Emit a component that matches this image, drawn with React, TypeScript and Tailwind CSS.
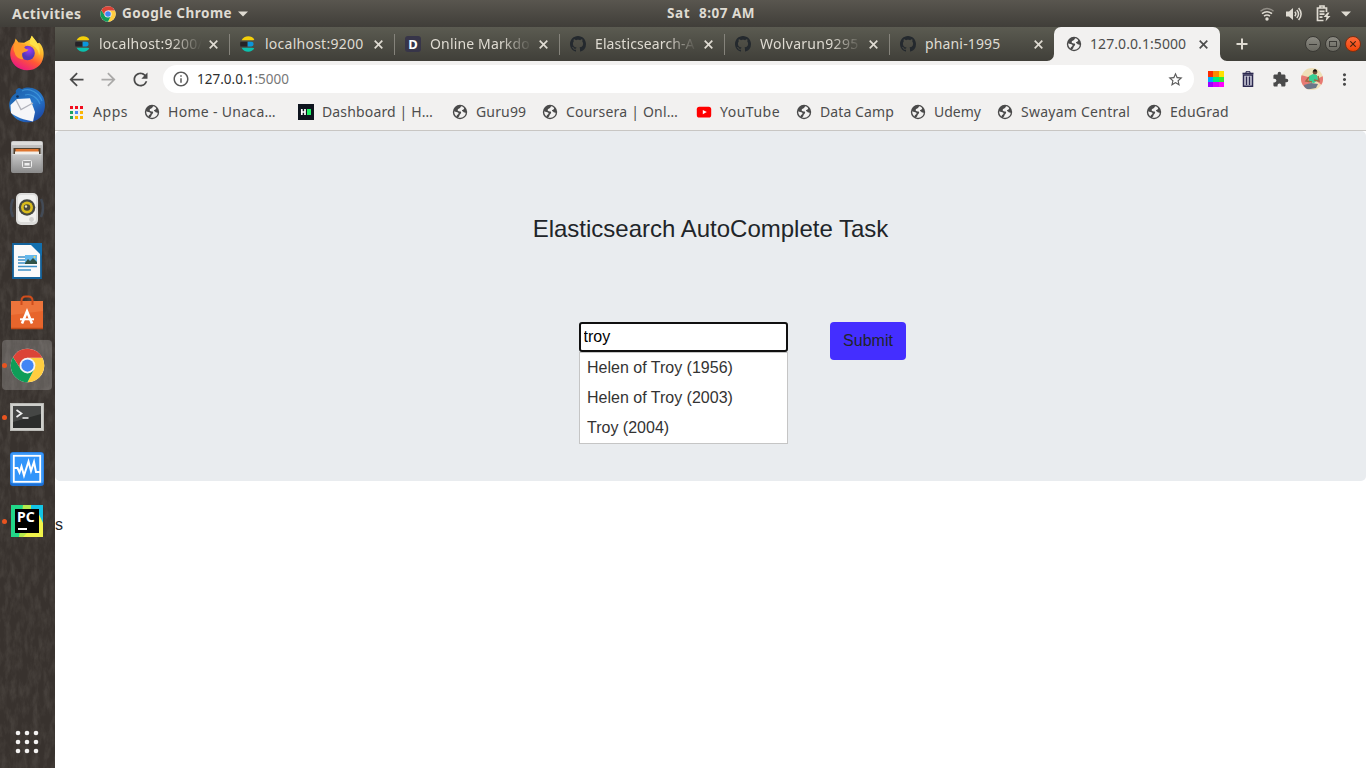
import type { ReactNode } from "react";
import {
  MdArrowBack,
  MdArrowForward,
  MdRefresh,
  MdInfoOutline,
  MdStarBorder,
  MdExtension,
  MdMoreVert,
} from "react-icons/md";

function ChromeLogo({ size }: { size: number }) {
  return (
    <svg width={size} height={size} viewBox="0 0 48 48">
      <circle cx="24" cy="24" r="23" fill="#fff" />
      <path d="M24 13.5 H44.5 A23 23 0 0 1 24 47 L33.1 29.2 Z" fill="#ffcd40" />
      <path d="M14.9 29.2 L4.1 12.5 A23 23 0 0 0 24 47 L33.1 29.2 Z" fill="#0f9d58" />
      <path d="M4.1 12.5 A23 23 0 0 1 44.5 13.5 H24 L14.9 29.2 Z" fill="#db4437" />
      <circle cx="24" cy="24" r="10.8" fill="#f4f4f4" />
      <circle cx="24" cy="24" r="8.4" fill="#4285f4" />
    </svg>
  );
}

function Elastic() {
  return (
    <svg width="16" height="16" viewBox="0 0 16 16">
      <path d="M1.6 4.3C2.9 1.6 5.3.2 8.3.2c2.6 0 4.7 1.2 6 3.2-.5.6-1.2.9-2.2.9z" fill="#f4cf0a" />
      <path d="M.4 5.7h7.2v4.7H.4C0 8.9 0 7.2.4 5.7z" fill="#252328" />
      <path d="M7.6 5.7h3.7a2.35 2.35 0 0 1 0 4.7H7.6z" fill="#0b96dc" />
      <path d="M1.6 11.7h10.5c1 0 1.7.3 2.2.9-1.3 2-3.4 3.2-6 3.2-3 0-5.4-1.4-6.7-4.1z" fill="#0bc0ad" />
    </svg>
  );
}

function GithubMark() {
  return (
    <svg width="16" height="16" viewBox="0 0 16 16" fill="#24292e">
      <path d="M8 0C3.58 0 0 3.58 0 8c0 3.54 2.29 6.53 5.47 7.59.4.07.55-.17.55-.38 0-.19-.01-.82-.01-1.49-2.01.37-2.53-.49-2.69-.94-.09-.23-.48-.94-.82-1.13-.28-.15-.68-.52-.01-.53.63-.01 1.08.58 1.23.82.72 1.21 1.87.87 2.33.66.07-.52.28-.87.51-1.07-1.78-.2-3.64-.89-3.64-3.95 0-.87.31-1.59.82-2.15-.08-.2-.36-1.02.08-2.12 0 0 .67-.21 2.2.82.64-.18 1.32-.27 2-.27s1.36.09 2 .27c1.53-1.04 2.2-.82 2.2-.82.44 1.1.16 1.92.08 2.12.51.56.82 1.27.82 2.15 0 3.07-1.87 3.75-3.65 3.95.29.25.54.73.54 1.48 0 1.07-.01 1.93-.01 2.2 0 .21.15.46.55.38A8.01 8.01 0 0 0 16 8c0-4.42-3.58-8-8-8z" />
    </svg>
  );
}

function Globe() {
  return (
    <svg width="16" height="16" viewBox="0 0 16 16">
      <circle cx="8" cy="8" r="7.2" fill="#4a4a4a" />
      <path
        d="M9.6 2.3C8.5 2.6 8.6 3.8 7.6 4.2 6.3 4.7 5.5 5.2 5.7 6.5 6 7.5 7.8 7.2 8.6 7.6 9.5 8.2 9.2 9.4 8.4 9.9 7.5 10.4 7.6 11.3 7.3 12 7 12.8 6.2 13.1 6.2 13.7 9.7 14.5 13.2 12.4 13.7 9.2 13.4 8.5 12.9 8.6 12.3 8.5 11.4 8.3 11.4 7.4 10.5 7.2 9.8 6.9 9.8 6.2 10.4 6 11.4 5.8 12.3 5.3 12.1 4.1 11.5 3.2 10.6 2.5 9.6 2.3Z"
        fill="#f2f1f0"
      />
      <path d="M2.3 7.3C3.6 8 5.1 7.9 6.3 8.8 6.9 9.6 6.3 10.4 5.6 10.7 4.8 11 4.7 11.7 4.4 12.4 2.8 11.2 2 9.2 2.3 7.3Z" fill="#f2f1f0" />
    </svg>
  );
}

function Dillinger() {
  return (
    <span className="flex h-4 w-4 items-center justify-center rounded-[3px] bg-[#373549] text-[13px] leading-none font-bold text-white">
      D
    </span>
  );
}

function TabClose() {
  return (
    <svg width="9" height="9" viewBox="0 0 9 9" className="ml-[7px] shrink-0" fill="none" stroke="currentColor" strokeWidth="1.7">
      <path d="m.7.7 7.6 7.6M8.3.7.7 8.3" />
    </svg>
  );
}

function Tab({
  icon,
  label,
  spacing,
  fade = true,
  last,
}: {
  icon: ReactNode;
  label: string;
  spacing: string;
  fade?: boolean;
  last?: boolean;
}) {
  return (
    <div className="flex h-[34px] w-[165px] shrink-0 items-center pl-[10px] text-[#dfdbd2]">
      {icon}
      <div
        className={
          fade
            ? "ml-2 w-[103px] shrink-0 mask-r-from-70% mask-r-to-100% pb-px whitespace-nowrap"
            : "ml-2 w-[103px] shrink-0 pb-px whitespace-nowrap"
        }
      >
        <span className={spacing}>{label}</span>
      </div>
      <TabClose />
      <div className={last ? "hidden" : "mt-[1px] ml-[11px] h-[21px] w-px shrink-0 bg-[#85837b]"} />
    </div>
  );
}

function Bookmark({ icon, label, box, spacing }: { icon: ReactNode; label: string; box: string; spacing: string }) {
  return (
    <div className={`flex shrink-0 items-center whitespace-nowrap ${box}`}>
      {icon}
      <span className={`ml-2 pb-[2px] ${spacing}`}>{label}</span>
    </div>
  );
}

const appsColors = ["#f20d1d", "#f20d1d", "#f20d1d", "#1ea362", "#4a8af4", "#fbb605", "#1ea362", "#fbb605", "#fbb605"];

function AppsGrid() {
  return (
    <div className="mr-px grid grid-cols-3 gap-[2px]">
      {appsColors.map((c, i) => (
        <span key={i} className="h-[3px] w-[3px]" style={{ backgroundColor: c }} />
      ))}
    </div>
  );
}

function HackerEarth() {
  return (
    <svg width="16" height="16" viewBox="0 0 16 16">
      <path fill="#0e141e" d="M0 0h16v16H0z" />
      <path d="M3.8 5v6M7 5v6M3.8 8H7" stroke="#fff" strokeWidth="1.7" />
      <path fill="#1ef065" d="M9 5h4v6H9z" />
    </svg>
  );
}

function YouTube() {
  return (
    <svg width="16" height="16" viewBox="0 0 16 16">
      <rect x=".8" y="2.7" width="14.4" height="10.8" rx="2.6" fill="#f00" />
      <path d="m6.8 5.9 4 2.2-4 2.2z" fill="#fff" />
    </svg>
  );
}

function Firefox() {
  return (
    <svg width="36" height="36" viewBox="0 0 36 36">
      <defs>
        <linearGradient id="ff" x1=".8" y1="0" x2=".25" y2="1">
          <stop offset="0" stopColor="#fff44f" />
          <stop offset=".35" stopColor="#ffb52b" />
          <stop offset=".62" stopColor="#ff5835" />
          <stop offset="1" stopColor="#e8128b" />
        </linearGradient>
        <radialGradient id="fp" cx=".6" cy=".3">
          <stop offset="0" stopColor="#a13af5" />
          <stop offset="1" stopColor="#5138b8" />
        </radialGradient>
      </defs>
      <path
        d="M1.3 20.5C.9 14 3.6 10 5.6 7l1-3.5 3 4 5.5.2L21 4.500l1.800-3.800 4.100 5.200 1.600 2.700 1.600-.9C33.700 11 35.500 16.500 34.400 22 32.900 30.500 26.500 35.300 18.200 35.300 9 35.300 1.900 28.500 1.300 20.500Z"
        fill="url(#ff)"
      />
      <circle cx="18.5" cy="18" r="7.3" fill="url(#fp)" />
      <path
        d="M5 9c3-1.800 6-1.500 8.500.2 1.500-.2 3 .1 4 .8l-2.300 2.500c1 1.300 2.300 1.900 4.100 2-.5 2.500-5.300 2.300-6 3.700-.7 2 .5 5 1.500 6-4 .5-8.500-2.500-9-6.200L4.500 15z"
        fill="#ff9b2b"
      />
      <path d="M20.800 9c0-4 1.900-8.300 1.900-8.300l4.100 5.200c4.700 5.400 4.400 12.600 3.200 14.600.3-5-3.800-9.300-9.200-11.500z" fill="#ffe34a" opacity=".9" />
    </svg>
  );
}

function Thunderbird() {
  return (
    <svg width="38" height="38" viewBox="0 0 38 38">
      <defs>
        <linearGradient id="tb" x1=".1" y1="0" x2=".9" y2="1">
          <stop offset="0" stopColor="#1b5fa8" />
          <stop offset=".55" stopColor="#2878cc" />
          <stop offset="1" stopColor="#1a3f9c" />
        </linearGradient>
      </defs>
      <path
        d="M8 7C7 4 9 2.500 11 2l3 1C21-.5 30 2.500 34 9c3.500 5 3.600 12 1.800 17C33 33 26 36.500 19 36.300 10 36 2 30 1.200 20 1 15.500 3 10 8 7Z"
        fill="url(#tb)"
      />
      <path d="M14 5c8-4 17 2 20 10M17 9c6-2 13 3 15 9" stroke="#54b5ee" strokeWidth="1.2" fill="none" opacity=".5" />
      <path d="M2.500 19 9 13l13-.8L27 26l-2 9.500C16 34 8 31 3 27Z" fill="#f6f6f8" />
      <path d="m8 14 5 9.500L25 17" fill="none" stroke="#b2b3bb" strokeWidth="1.3" />
      <circle cx="9.5" cy="10.5" r="1.3" fill="#0c315e" />
    </svg>
  );
}

function Files() {
  return (
    <svg width="34" height="34" viewBox="0 0 34 34">
      <defs>
        <linearGradient id="fi" x1="0" y1="0" x2="0" y2="1">
          <stop offset="0" stopColor="#c9c9c9" />
          <stop offset="1" stopColor="#8c8c8c" />
        </linearGradient>
      </defs>
      <rect x="1" y="1" width="32" height="32" rx="2" fill="url(#fi)" />
      <path d="M2 2h30v3H2z" fill="#dddddc" />
      <path d="M3.500 8h27v6h-27z" fill="#50402e" />
      <path d="M5.500 9h23v5h-23z" fill="#df7630" />
      <path d="M5 11.500h24V14H5z" fill="#f3eee7" />
      <path d="M2.500 14h29v18.500h-29z" fill="url(#fi)" />
      <path d="M2.500 14.500h29" stroke="#d6d6d6" />
      <rect x="12.5" y="20.5" width="9" height="7" rx="1" fill="#a0a0a0" stroke="#eee" />
      <path d="M14.500 23h5v2.500h-5z" fill="#eee" />
    </svg>
  );
}

function Rhythmbox() {
  return (
    <svg width="40" height="36" viewBox="0 0 40 36">
      <path d="M6 8q-4 9 0 18M34 8q4 9 0 18" fill="none" stroke="#46566d" strokeWidth="2.5" opacity=".6" />
      <rect x="9" y="2" width="22" height="32" rx="5" fill="#dcdcda" />
      <rect x="11" y="4" width="18" height="27" rx="3" fill="#f1f1ef" />
      <circle cx="20" cy="16.5" r="8.3" fill="#474942" />
      <circle cx="20" cy="16.5" r="6" fill="#d9bc1c" />
      <circle cx="20" cy="16.5" r="3.3" fill="#4c4a39" />
      <circle cx="19" cy="15.5" r="1.2" fill="#e8e4bb" />
      <circle cx="24.5" cy="28.5" r="2.4" fill="#d1d1cf" />
    </svg>
  );
}

function Writer() {
  return (
    <svg width="30" height="36" viewBox="0 0 30 36">
      <path d="M1 1h20l8 9v25H1z" fill="#fafafa" stroke="#14639c" strokeWidth="1.8" />
      <path d="M17 0h13v13z" fill="#126fae" />
      <path d="M6 14h7M6 17h7M6 20h7M6 23.500h19M6 27h13" stroke="#3f91c7" strokeWidth="1.7" />
      <path d="M13 12h12v9H13z" fill="#62b8ed" />
      <path d="m13 20 3-4 2 2 3-3 4 4v2H13z" fill="#305348" />
      <circle cx="22.5" cy="14" r="1" fill="#f3d856" />
    </svg>
  );
}

function Software() {
  return (
    <svg width="34" height="36" viewBox="0 0 34 36">
      <path d="M1 6h32v28H1z" fill="#e7652c" />
      <path d="M1 6h32v10L1 20z" fill="#f07a41" opacity=".7" />
      <path d="M1 33.500h32" stroke="#bd4a18" strokeWidth="1.5" />
      <path d="M11.500 10V6q0-4.500 4-4.500h3q4 0 4 4.500v4" fill="none" stroke="#cf4d1c" strokeWidth="2" />
      <path d="m12 28.500 5-12 5 12" fill="none" stroke="#fff" strokeWidth="2.6" />
      <path d="M10 24.300h14" stroke="#fff" strokeWidth="2" />
    </svg>
  );
}

function Terminal() {
  return (
    <svg width="34" height="30" viewBox="0 0 34 30">
      <path d="M0 1h34v28H0z" fill="#b9b9b5" />
      <path d="M1 2h32v26H1z" fill="#cfcfcb" />
      <path d="M3 4h28v22H3z" fill="#2c2d2c" />
      <path d="M3 4h28v8L3 20z" fill="#454645" />
      <path d="m6.500 8 5 3.500-5 3.500M12.500 16h6" fill="none" stroke="#efefef" strokeWidth="1.7" />
    </svg>
  );
}

function Monitor() {
  return (
    <svg width="34" height="34" viewBox="0 0 34 34">
      <rect width="34" height="34" rx="3" fill="#1c6fd5" />
      <rect x=".5" y=".5" width="33" height="31" rx="3" fill="#3b98f7" />
      <rect x="3.8" y="3.8" width="26.4" height="26" fill="#3295fa" stroke="#fff" strokeWidth="1.8" />
      <path d="M4 16h3.500l2 4.500 2-6 2.500 9 4.500-14 2.500 9.500L24 10l2 10h4" fill="none" stroke="#fff" strokeWidth="2" />
    </svg>
  );
}

function PyCharm() {
  return (
    <div className="grid h-8 w-8">
      <svg className="col-start-1 row-start-1" width="32" height="32" viewBox="0 0 32 32">
        <path d="M0 0h32v32H0z" fill="#21d789" />
        <path d="M12 0h10l4 5-6 27H8z" fill="#b4e94d" />
        <path d="M20 0h12v18l-4-2-8-12z" fill="#13c5e5" />
        <path d="m26 5 6 13v14H12l8-8z" fill="#f0f34a" />
      </svg>
      <div className="col-start-1 row-start-1 m-1 flex h-6 w-6 flex-col bg-black pl-[2px] text-white">
        <span className="pt-[1px] text-[14px] leading-[14px] font-bold">PC</span>
        <span className="mt-[4px] ml-px h-[2px] w-[9px] bg-white" />
      </div>
    </div>
  );
}

const dock: { icon: ReactNode; running?: boolean; active?: boolean }[] = [
  { icon: <Firefox /> },
  { icon: <Thunderbird /> },
  { icon: <Files /> },
  { icon: <Rhythmbox /> },
  { icon: <Writer /> },
  { icon: <Software /> },
  { icon: <ChromeLogo size={35} />, running: true, active: true },
  { icon: <Terminal />, running: true },
  { icon: <Monitor /> },
  { icon: <PyCharm />, running: true },
];

function Dock() {
  return (
    <aside className="relative flex w-[55px] shrink-0 flex-col bg-[#38322e]">
      <svg className="absolute inset-0 h-full w-full opacity-10">
        <filter id="grain">
          <feTurbulence type="fractalNoise" baseFrequency="0.18 0.07" numOctaves="5" seed="4" />
          <feColorMatrix values="0 0 0 0 .55  0 0 0 0 .52  0 0 0 0 .46  2.4 0 0 0 -.9" />
        </filter>
        <rect width="100%" height="100%" filter="url(#grain)" />
      </svg>
      {dock.map((d, i) => (
        <div key={i} className="relative flex h-[52px] shrink-0 items-center pl-[2px]">
          <span className={d.running ? "z-10 h-[5px] w-[5px] rounded-full bg-[#e95420]" : "h-[5px] w-[5px]"} />
          <div
            className={
              d.active
                ? "-ml-[5px] flex h-[50px] w-[50px] items-center justify-center rounded-[4px] bg-white/20"
                : "-ml-[5px] flex h-[50px] w-[50px] items-center justify-center"
            }
          >
            {d.icon}
          </div>
        </div>
      ))}
      <svg width="24" height="24" viewBox="0 0 24 24" className="relative mt-auto mb-[14px] ml-[15px]" fill="#f4f3f2">
        {[3, 12, 21].map((y) => [3, 12, 21].map((x) => <circle key={`${x}-${y}`} cx={x} cy={y} r="2.3" />))}
      </svg>
    </aside>
  );
}

function TopBar() {
  return (
    <header className="flex h-[27px] shrink-0 items-center bg-linear-to-b from-[#59564f] to-[#403e39] font-bold text-[#dfdbd2]">
      <span className="ml-3 w-[88px] text-[14px] tracking-[0.45px]">Activities</span>
      <ChromeLogo size={16} />
      <span className="ml-[6px] w-[111px] text-[13.5px] tracking-[0.5px] whitespace-nowrap">Google Chrome</span>
      <svg width="10" height="6" viewBox="0 0 10 6" className="ml-[5px]">
        <path d="M0 .5h10L5 5.500z" fill="currentColor" />
      </svg>
      <span className="ml-[419px] w-[32px] text-[13.5px] tracking-[0.6px]">Sat</span>
      <span className="text-[13.5px] tracking-[0.5px] whitespace-nowrap">8:07 AM</span>
      <div className="mr-[15px] ml-auto flex items-center">
        <svg width="16" height="16" viewBox="0 0 16 16" fill="none" stroke="currentColor" strokeWidth="1.5">
          <path d="M1.500 5.200q6.500-5.500 13 0" opacity=".45" />
          <path d="M3 7.700q5-4 10 0M5 10.200q3-2.300 6 0" />
          <circle cx="8" cy="13" r="1.7" fill="currentColor" stroke="none" />
        </svg>
        <svg width="17" height="16" viewBox="0 0 17 16" className="ml-[10px]" fill="none" stroke="currentColor" strokeWidth="1.5">
          <path d="M1 5.500h3L8 2v12L4 10.500H1z" fill="currentColor" stroke="none" />
          <path d="M9.800 5.800q2 2.200 0 4.400M11.800 3.900q3.500 4.100 0 8.200M13.600 2q5 6 0 12" />
        </svg>
        <svg width="15" height="17" viewBox="0 0 15 17" className="ml-[14px]" fill="none" stroke="currentColor" strokeWidth="1.7">
          <path d="M10.500 7V3H1.500v12.500h6M4 2.500V1h4v1.500M3.500 6.300h5M3.500 9.200h5M3.500 12.200h3" />
          <path d="m11.500 7.500-4 4.500h3l-1 4.500 5-5.500h-3l2-3.500z" fill="currentColor" stroke="none" />
        </svg>
        <svg width="10" height="6" viewBox="0 0 10 6" className="ml-[10px]">
          <path d="M0 .5h10L5 5.500z" fill="currentColor" />
        </svg>
      </div>
    </header>
  );
}

function TabStrip() {
  return (
    <div className="flex h-[34px] shrink-0 items-center bg-linear-to-b from-[#5b5b51] to-[#403f39] pl-[10px] text-[14px]">
      <Tab icon={<Elastic />} label="localhost:9200/" spacing="tracking-[0.25px]" />
      <Tab icon={<Elastic />} label="localhost:9200" spacing="pl-px tracking-[0.25px]" fade={false} />
      <Tab icon={<Dillinger />} label="Online Markdo" spacing="pl-px tracking-[0.15px]" />
      <Tab icon={<GithubMark />} label="Elasticsearch-A" spacing="pl-px tracking-[0.1px]" />
      <Tab icon={<GithubMark />} label="Wolvarun9295" spacing="pl-px tracking-[0.3px]" />
      <Tab icon={<GithubMark />} label="phani-1995" spacing="pl-px tracking-[0.15px]" fade={false} last />
      <div className="relative -ml-px flex h-[34px] w-[166px] shrink-0 items-center rounded-t-[7px] bg-[#f2f1f0] pl-[12px] text-[#4d4d4d]">
        <svg className="absolute bottom-0 -left-[7px]" width="7" height="7" viewBox="0 0 7 7">
          <path d="M7 0v7H0a7 7 0 0 0 7-7z" fill="#f2f1f0" />
        </svg>
        <svg className="absolute -right-[7px] bottom-0" width="7" height="7" viewBox="0 0 7 7">
          <path d="M0 0v7h7a7 7 0 0 1-7-7z" fill="#f2f1f0" />
        </svg>
        <Globe />
        <span className="ml-2 w-[102px] pb-px tracking-[0.08px]">127.0.0.1:5000</span>
        <TabClose />
      </div>
      <svg width="12" height="12" viewBox="0 0 12 12" className="ml-4 text-[#dfdbd2]">
        <path d="M6 .5v11M.5 6h11" stroke="currentColor" strokeWidth="2" />
      </svg>
      <div className="mr-[5px] ml-auto flex gap-[4px]">
        <span className="flex h-4 w-4 items-center justify-center rounded-full border border-[#3a3934] bg-linear-to-b from-[#8c8b83] to-[#6a6961]">
          <span className="h-px w-2 bg-[#3c3b37]" />
        </span>
        <span className="flex h-4 w-4 items-center justify-center rounded-full border border-[#3a3934] bg-linear-to-b from-[#8c8b83] to-[#6a6961]">
          <span className="h-[6px] w-2 border border-[#3c3b37]" />
        </span>
        <span className="flex h-4 w-4 items-center justify-center rounded-full border border-[#7d2f12] bg-linear-to-b from-[#ff6a38] to-[#f04300] text-[#42220f]">
          <svg width="6" height="6" viewBox="0 0 6 6">
            <path d="m.3.3 5.400 5.400M5.700.3.3 5.700" stroke="currentColor" strokeWidth="1.1" />
          </svg>
        </span>
      </div>
    </div>
  );
}

const tiles = ["#ff2a00", "#ff8a00", "#ffe100", "#00a8ff", "#00ef75", "#34e935", "#9d00ff", "#d900ff", "#ff00ff"];

function Toolbar() {
  return (
    <div className="flex h-9 shrink-0 items-center bg-[#f2f1f0] text-[#4a4a4a]">
      <MdArrowBack size={21} className="ml-[11px]" />
      <MdArrowForward size={21} className="ml-[11px] text-[#aaa9a8]" />
      <MdRefresh size={21} className="ml-[11px]" />
      <div className="ml-[12px] flex h-7 w-[1031px] shrink-0 items-center rounded-full bg-white pl-[9px]">
        <MdInfoOutline size={18} className="text-[#5a5a5a]" />
        <span className="ml-[7px] text-[13.5px] tracking-[0.02px] text-[#2e2e2e]">
          127.0.0.1<span className="text-[#777]">:5000</span>
        </span>
        <MdStarBorder size={17} className="mr-[10px] ml-auto text-[#5a5a5a]" />
      </div>
      <div className="ml-[14px] grid h-4 w-4 shrink-0 grid-cols-[5px_6px_5px] grid-rows-[6px_5px_5px]">
        {tiles.map((c, i) => (
          <span key={i} style={{ backgroundColor: c }} />
        ))}
      </div>
      <svg width="12" height="16" viewBox="0 0 12 16" className="ml-[18px]" fill="none" stroke="#2c2950">
        <path d="M.5 2.500h11" strokeWidth="1.6" />
        <path d="M4 2V.7h4V2" />
        <path d="M1.500 4h9v11.300h-9z" strokeWidth="1.5" fill="#cfcedb" />
        <path d="M4.500 5.500V14M7.500 5.500V14" strokeWidth="1.4" />
      </svg>
      <MdExtension size={17} className="ml-[18px]" />
      <svg width="22" height="22" viewBox="0 0 22 22" className="ml-[12px]">
        <clipPath id="av">
          <circle cx="11" cy="11" r="11" />
        </clipPath>
        <g clipPath="url(#av)">
          <path fill="#efe0b8" d="M0 0h22v22H0z" />
          <path d="m0 7 7 2 2 6-3 7H0zM14 12l8-4v10z" fill="#e87a74" />
          <path d="m8 8 4-2 4 1 1 5-4 3-5-1z" fill="#36cf93" />
          <path d="m8 9-3 4 6 1M17 8l1 5-5-1" stroke="#9c6b45" strokeWidth="1.5" fill="none" />
          <circle cx="14" cy="4.2" r="2.2" fill="#6e4a35" />
          <path d="M11.500 3.500q2.500-5 5 0z" fill="#17120f" />
          <path d="m3 17 7-2 7 1-2 4-11 2z" fill="#6d7788" />
        </g>
      </svg>
      <MdMoreVert size={19} className="ml-[12px]" />
    </div>
  );
}

function Bookmarks() {
  return (
    <div className="flex h-[34px] shrink-0 items-center border-b border-[#c8c6c3] bg-[#f2f1f0] pb-[3px] pl-[14px] text-[14px] text-[#4d4d4d]">
      <Bookmark icon={<AppsGrid />} label="Apps" box="w-[75px] pl-px" spacing="ml-[9px] tracking-[0.55px]" />
      <Bookmark icon={<Globe />} label="Home - Unaca…" box="w-[154px]" spacing="tracking-[0.3px]" />
      <Bookmark icon={<HackerEarth />} label="Dashboard | H…" box="w-[154px]" spacing="tracking-[0.15px]" />
      <Bookmark icon={<Globe />} label="Guru99" box="w-[90px]" spacing="tracking-[0.15px]" />
      <Bookmark icon={<Globe />} label="Coursera | Onl…" box="w-[154px]" spacing="tracking-[0.2px]" />
      <Bookmark icon={<YouTube />} label="YouTube" box="w-[100px]" spacing="tracking-[0.5px]" />
      <Bookmark icon={<Globe />} label="Data Camp" box="w-[114px]" spacing="tracking-[0.1px]" />
      <Bookmark icon={<Globe />} label="Udemy" box="w-[87px]" spacing="" />
      <Bookmark icon={<Globe />} label="Swayam Central" box="w-[149px]" spacing="tracking-[0.25px]" />
      <Bookmark icon={<Globe />} label="EduGrad" box="w-[100px]" spacing="tracking-[0.25px]" />
    </div>
  );
}

const suggestions = ["Helen of Troy (1956)", "Helen of Troy (2003)", "Troy (2004)"];

function Page() {
  return (
    <main className="flex-1 bg-white font-['Liberation_Sans',Arial,sans-serif] text-[16px] leading-6 text-[#212529]">
      <section className="h-[350px] rounded-[5px] bg-[#e9ecef] pt-[83px]">
        <h4 className="text-center text-[24px] leading-[29px]">Elasticsearch AutoComplete Task</h4>
        <form className="mt-[79px] flex items-start pl-[524px]">
          <div className="w-[209px]">
            <input
              defaultValue="troy"
              className="block h-[30px] w-full rounded-[3px] border-2 border-[#101010] bg-white px-[2.5px] text-[16px] text-black outline-none"
            />
            <ul className="h-[92px] border border-[#c5c5c5] bg-white text-[#333]">
              {suggestions.map((s) => (
                <li key={s} className="h-[30px] pl-[7px] leading-[30px]">
                  {s}
                </li>
              ))}
            </ul>
          </div>
          <button type="button" className="ml-[42px] h-[38px] w-[76px] rounded-[4px] bg-[#442eff] text-[#212529]">
            Submit
          </button>
        </form>
      </section>
      <p className="mt-8">s</p>
    </main>
  );
}

export default function App() {
  return (
    <div className="flex h-[768px] w-[1366px] flex-col overflow-hidden font-['Noto_Sans',sans-serif]">
      <TopBar />
      <div className="flex min-h-0 flex-1">
        <Dock />
        <div className="flex w-[1311px] flex-col">
          <TabStrip />
          <Toolbar />
          <Bookmarks />
          <Page />
        </div>
      </div>
    </div>
  );
}
